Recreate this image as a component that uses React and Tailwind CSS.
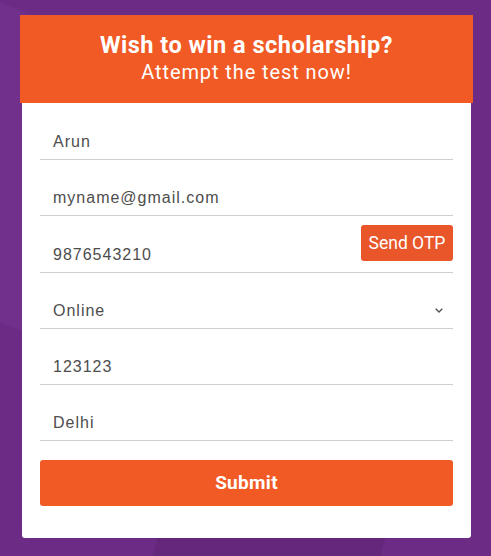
import React from "react";

function Field({ value, h = "h-[56px]", children }) {
  return (
    <div className={`relative ${h} border-b border-[#cfcfcf] flex items-end`}>
      <span
        className="pl-[13px] pb-[5px] text-[16px] text-[#4d4d4d] tracking-[1px]"
        style={{ fontFamily: "Arial, 'Liberation Sans', sans-serif" }}
      >
        {value}
      </span>
      {children}
    </div>
  );
}

export default function App() {
  return (
    <div className="w-[491px] h-[556px] bg-[#6c2c86] relative overflow-hidden pt-[15px]">
      <div className="absolute -left-[80px] top-[20px] w-[200px] h-[300px] bg-[#74338f] rotate-[20deg] opacity-60" />
      <div className="absolute left-[150px] top-[480px] w-[220px] h-[200px] bg-[#5f2477] rotate-[15deg] opacity-60" />
      <div className="relative ml-[20px] w-[453px]">
        <div
          className="bg-[#f15a24] h-[88px] flex flex-col items-center justify-center text-white"
          style={{ fontFamily: "Roboto, sans-serif" }}
        >
          <div className="text-[23.5px] font-bold leading-[28px] tracking-[0.5px] -mt-[2px]">Wish to win a scholarship?</div>
          <div className="text-[20px] leading-[26px] tracking-[0.9px]">Attempt the test now!</div>
        </div>
        <div className="bg-white mx-[2px] rounded-b-[3px] px-[18px] pt-[1px] pb-[32px]">
          <Field value="Arun" />
          <Field value="myname@gmail.com" />
          <Field value="9876543210" h="h-[57px]">
            <button
              className="absolute right-0 top-[9px] w-[92px] h-[36px] bg-[#e9562a] rounded-[3px] text-white text-[17.5px]"
              style={{ fontFamily: "Roboto, sans-serif" }}
            >
              Send OTP
            </button>
          </Field>
          <Field value="Online">
            <svg className="absolute right-[10px] bottom-[15px]" width="8" height="5" viewBox="0 0 8 5">
              <path d="M0.7 0.7 L4 4 L7.3 0.7" fill="none" stroke="#555" strokeWidth="1.4" />
            </svg>
          </Field>
          <Field value="123123" />
          <Field value="Delhi" />
          <button
            className="mt-[19px] w-full h-[46px] bg-[#f15a24] rounded-[3px] text-white text-[19px] font-bold tracking-[0.3px]"
            style={{ fontFamily: "Roboto, sans-serif" }}
          >
            Submit
          </button>
        </div>
      </div>
    </div>
  );
}
